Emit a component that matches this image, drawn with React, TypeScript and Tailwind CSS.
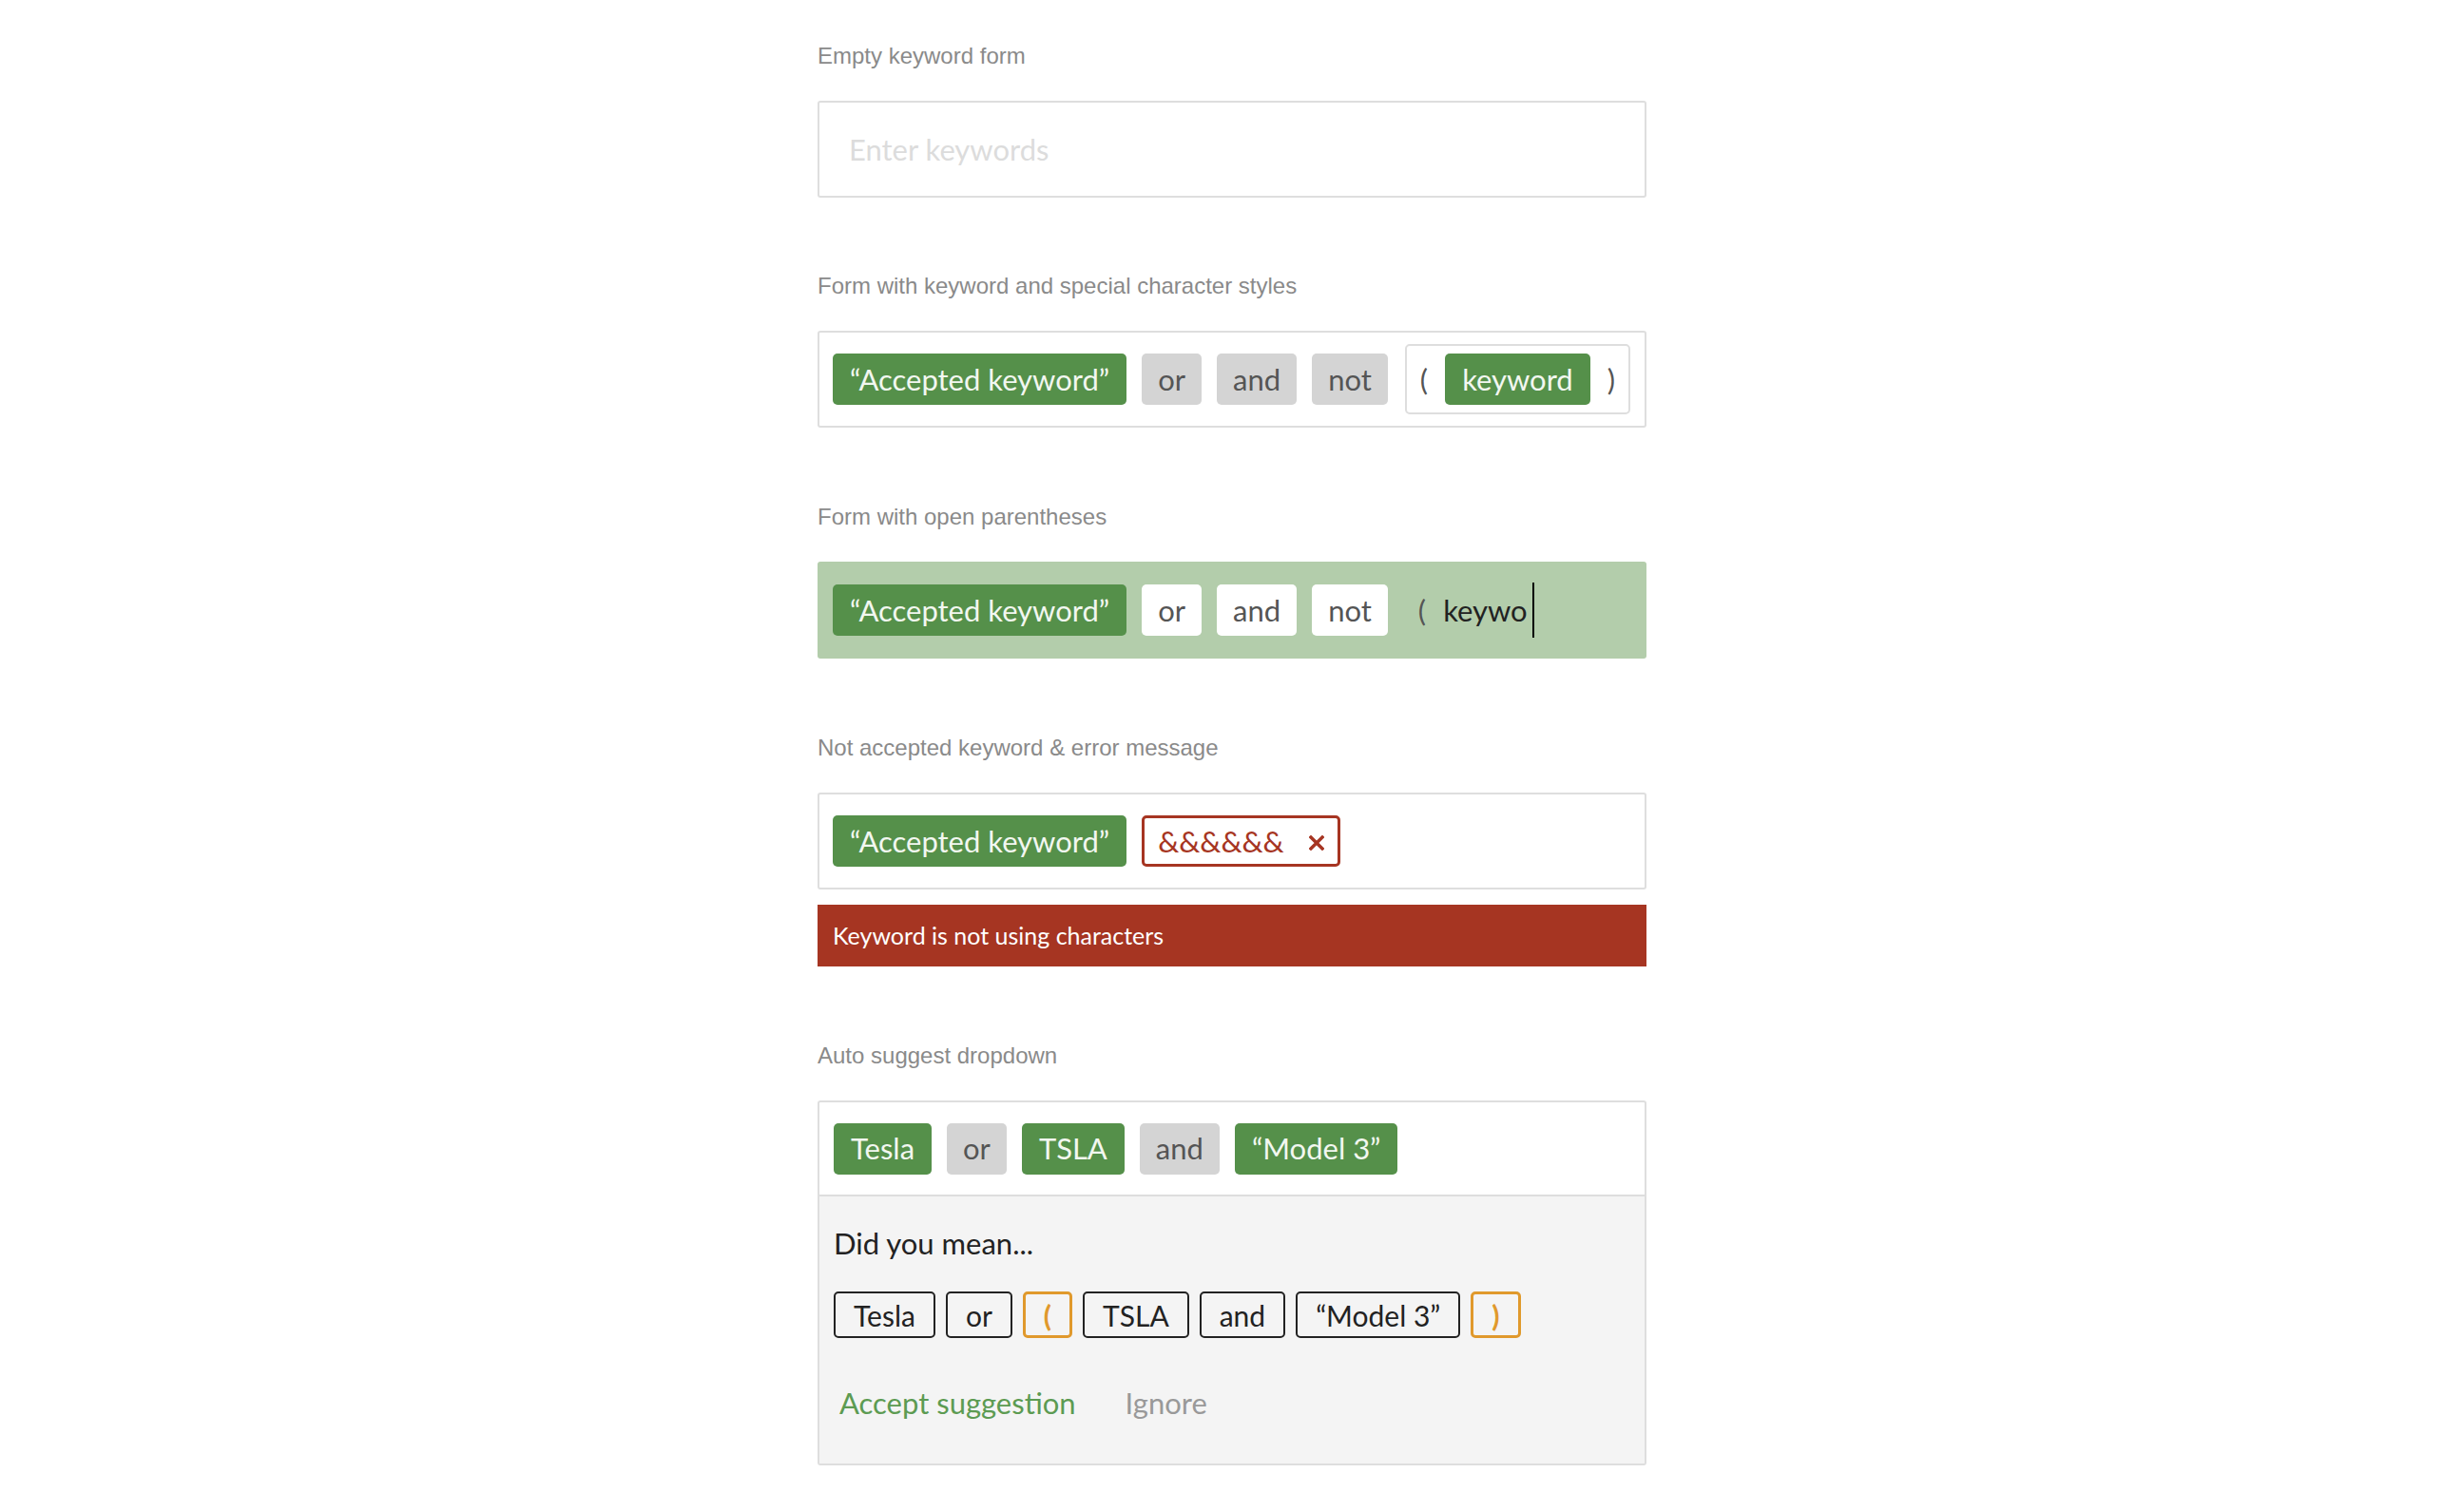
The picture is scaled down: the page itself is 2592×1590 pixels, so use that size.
import React from "react";

const chipBase =
  "h-[54px] flex items-center rounded-[5px] text-[31px] leading-none whitespace-nowrap";

function Accepted({ children }: { children: React.ReactNode }) {
  return <span className={`${chipBase} px-[18px] bg-[#55904a] text-[#f2f7f0]`}>{children}</span>;
}

function Operator({ children, white }: { children: React.ReactNode; white?: boolean }) {
  return (
    <span className={`${chipBase} px-[17px] text-[#555555] ${white ? "bg-white" : "bg-[#d4d4d4]"}`}>
      {children}
    </span>
  );
}

function Paren({ children }: { children: React.ReactNode }) {
  return <span className="text-[31px] leading-none text-[#555555]">{children}</span>;
}

function Outlined({ children, orange }: { children: React.ReactNode; orange?: boolean }) {
  return (
    <span
      className={`h-[49px] flex items-center rounded-[5px] text-[30px] leading-none whitespace-nowrap ${
        orange
          ? "border-[3px] border-[#e0992c] text-[#e0992c] font-bold px-[19px]"
          : "border-2 border-[#222222] text-[#222222] px-[19px]"
      }`}
    >
      {children}
    </span>
  );
}

function Label({ children }: { children: React.ReactNode }) {
  return (
    <div
      className="h-[28px] leading-[28px] text-[24px] text-[#8a8a8a] mb-[33px]"
      style={{ fontFamily: '"Liberation Sans", Arial, sans-serif' }}
    >
      {children}
    </div>
  );
}

export default function App() {
  return (
    <div
      className="min-h-screen bg-white flex justify-center"
      style={{ fontFamily: 'Lato, "Open Sans", sans-serif' }}
    >
      <div className="w-[872px] pt-[45px] pb-[40px] flex flex-col">
        {/* Empty form */}
        <Label>Empty keyword form</Label>
        <div className="h-[102px] border-2 border-[#dedede] rounded-[3px] flex items-center pl-[31px]">
          <span className="text-[31px] text-[#dcdcdc]">Enter keywords</span>
        </div>

        {/* Keyword + special characters */}
        <div className="mt-[79px]">
          <Label>Form with keyword and special character styles</Label>
          <div className="h-[102px] border-2 border-[#dedede] rounded-[3px] flex items-center gap-[16px] pl-[14px]">
            <Accepted>“Accepted keyword”</Accepted>
            <Operator>or</Operator>
            <Operator>and</Operator>
            <Operator>not</Operator>
            <div className="h-[74px] ml-[2px] border-2 border-[#dedede] rounded-[5px] flex items-center gap-[18px] px-[14px]">
              <Paren>(</Paren>
              <Accepted>keyword</Accepted>
              <Paren>)</Paren>
            </div>
          </div>
        </div>

        {/* Open parentheses */}
        <div className="mt-[80px]">
          <Label>Form with open parentheses</Label>
          <div className="h-[102px] bg-[#b3cdab] rounded-[3px] flex items-center gap-[16px] pl-[16px]">
            <Accepted>“Accepted keyword”</Accepted>
            <Operator white>or</Operator>
            <Operator white>and</Operator>
            <Operator white>not</Operator>
            <div className="flex items-center gap-[18px] pl-[16px]">
              <Paren>(</Paren>
              <span className="flex items-center text-[31px] leading-none text-[#222222]">
                keywo
                <span className="ml-[5px] w-[2px] h-[58px] bg-black" />
              </span>
            </div>
          </div>
        </div>

        {/* Error */}
        <div className="mt-[80px]">
          <Label>Not accepted keyword &amp; error message</Label>
          <div className="h-[102px] border-2 border-[#dedede] rounded-[3px] flex items-center gap-[16px] pl-[14px]">
            <Accepted>“Accepted keyword”</Accepted>
            <span className="h-[54px] px-[14px] flex items-center gap-[26px] rounded-[5px] border-[3px] border-[#a63522] text-[#a63522] text-[31px] leading-none">
              &amp;&amp;&amp;&amp;&amp;&amp;
              <svg width="16" height="16" viewBox="0 0 16 16" className="mt-[4px]">
                <path d="M2 2L14 14M14 2L2 14" stroke="#a63522" strokeWidth="3.4" strokeLinecap="square" />
              </svg>
            </span>
          </div>
          <div className="mt-[16px] h-[65px] bg-[#a63522] flex items-center pl-[16px] text-[25px] text-white">
            Keyword is not using characters
          </div>
        </div>

        {/* Auto suggest */}
        <div className="mt-[80px]">
          <Label>Auto suggest dropdown</Label>
          <div className="border-2 border-[#dedede] rounded-[3px]">
            <div className="h-[97px] flex items-center gap-[16px] pl-[15px]">
              <Accepted>Tesla</Accepted>
              <Operator>or</Operator>
              <Accepted>TSLA</Accepted>
              <Operator>and</Operator>
              <Accepted>“Model 3”</Accepted>
            </div>
            <div className="border-t-2 border-[#dedede] bg-[#f4f4f4] pt-[29px] pb-[44px] pl-[15px]">
              <div className="h-[40px] leading-[40px] text-[31px] text-[#222222]">Did you mean...</div>
              <div className="mt-[31px] flex items-center gap-[11px]">
                <Outlined>Tesla</Outlined>
                <Outlined>or</Outlined>
                <Outlined orange>(</Outlined>
                <Outlined>TSLA</Outlined>
                <Outlined>and</Outlined>
                <Outlined>“Model 3”</Outlined>
                <Outlined orange>)</Outlined>
              </div>
              <div className="mt-[48px] h-[40px] flex items-center gap-[52px] ml-[6px] text-[31px]">
                <span className="text-[#5c9b52]">Accept suggestion</span>
                <span className="text-[#999999]">Ignore</span>
              </div>
            </div>
          </div>
        </div>
      </div>
    </div>
  );
}
